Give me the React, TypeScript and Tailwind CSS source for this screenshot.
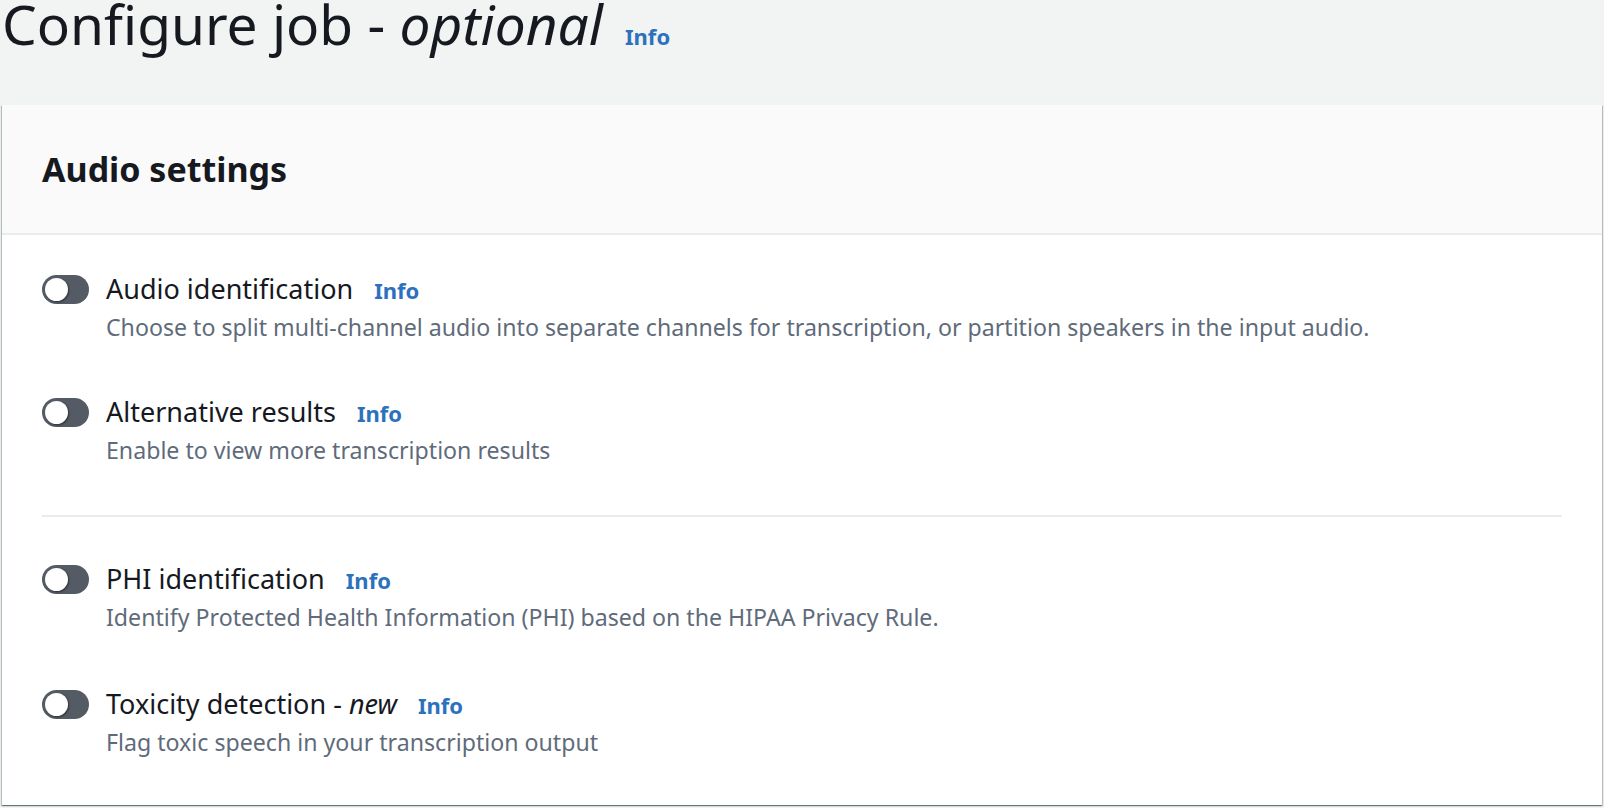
import React from "react";

const font = { fontFamily: '"Noto Sans", "Open Sans", Arial, sans-serif' };

function Toggle() {
  return (
    <div className="relative w-[47px] h-[29px] shrink-0 rounded-full bg-[#545b64]">
      <div className="absolute left-[3px] top-[3px] w-[23px] h-[23px] rounded-full bg-white shadow-[1px_1px_2px_rgba(0,0,0,0.45)]" />
    </div>
  );
}

function Info() {
  return <span className="ml-[21px] text-[22px] font-bold text-[#2c71bd]">Info</span>;
}

function Row({ label, desc }: { label: React.ReactNode; desc: string }) {
  return (
    <div className="flex flex-col">
      <div className="flex items-center h-[32px]">
        <Toggle />
        <div className="ml-[17px] flex items-baseline text-[27px] leading-[32px] text-[#16191f]">
          <span>{label}</span>
          <Info />
        </div>
      </div>
      <div className="mt-[8px] pl-[64px] text-[23.15px] leading-[28px] text-[#5f6b7a]">{desc}</div>
    </div>
  );
}

export default function App() {
  return (
    <div className="w-[1604px] h-[808px] bg-[#f2f3f3] overflow-hidden" style={font}>
      <div className="h-[105px] pl-[2px]">
        <div className="flex items-baseline">
          <h1 className="text-[55px] font-normal text-[#16191f] leading-[48px]">
            Configure job - <i>optional</i>
          </h1>
          <span className="ml-[22px] text-[22px] font-bold text-[#2c71bd]">Info</span>
        </div>
      </div>
      <div className="ml-[2px] w-[1600px] h-[700px] bg-white shadow-[0_1px_1px_rgba(0,28,36,0.35),1px_1px_1px_rgba(0,28,36,0.2),-1px_1px_1px_rgba(0,28,36,0.2)]">
        <div className="h-[130px] flex items-center px-[40px] bg-[#fafafa] border-b-2 border-[#e9ebed]">
          <h2 className="text-[34px] font-bold text-[#16191f] leading-[40px]">Audio settings</h2>
        </div>
        <div className="px-[40px] pt-[38px]">
          <Row
            label="Audio identification"
            desc="Choose to split multi-channel audio into separate channels for transcription, or partition speakers in the input audio."
          />
          <div className="mt-[55px]">
            <Row label="Alternative results" desc="Enable to view more transcription results" />
          </div>
          <div className="mt-[51px] border-t-2 border-[#e9ebed]" />
          <div className="mt-[46px]">
            <Row
              label="PHI identification"
              desc="Identify Protected Health Information (PHI) based on the HIPAA Privacy Rule."
            />
          </div>
          <div className="mt-[57px]">
            <Row
              label={
                <>
                  Toxicity detection - <i>new</i>
                </>
              }
              desc="Flag toxic speech in your transcription output"
            />
          </div>
        </div>
      </div>
    </div>
  );
}
